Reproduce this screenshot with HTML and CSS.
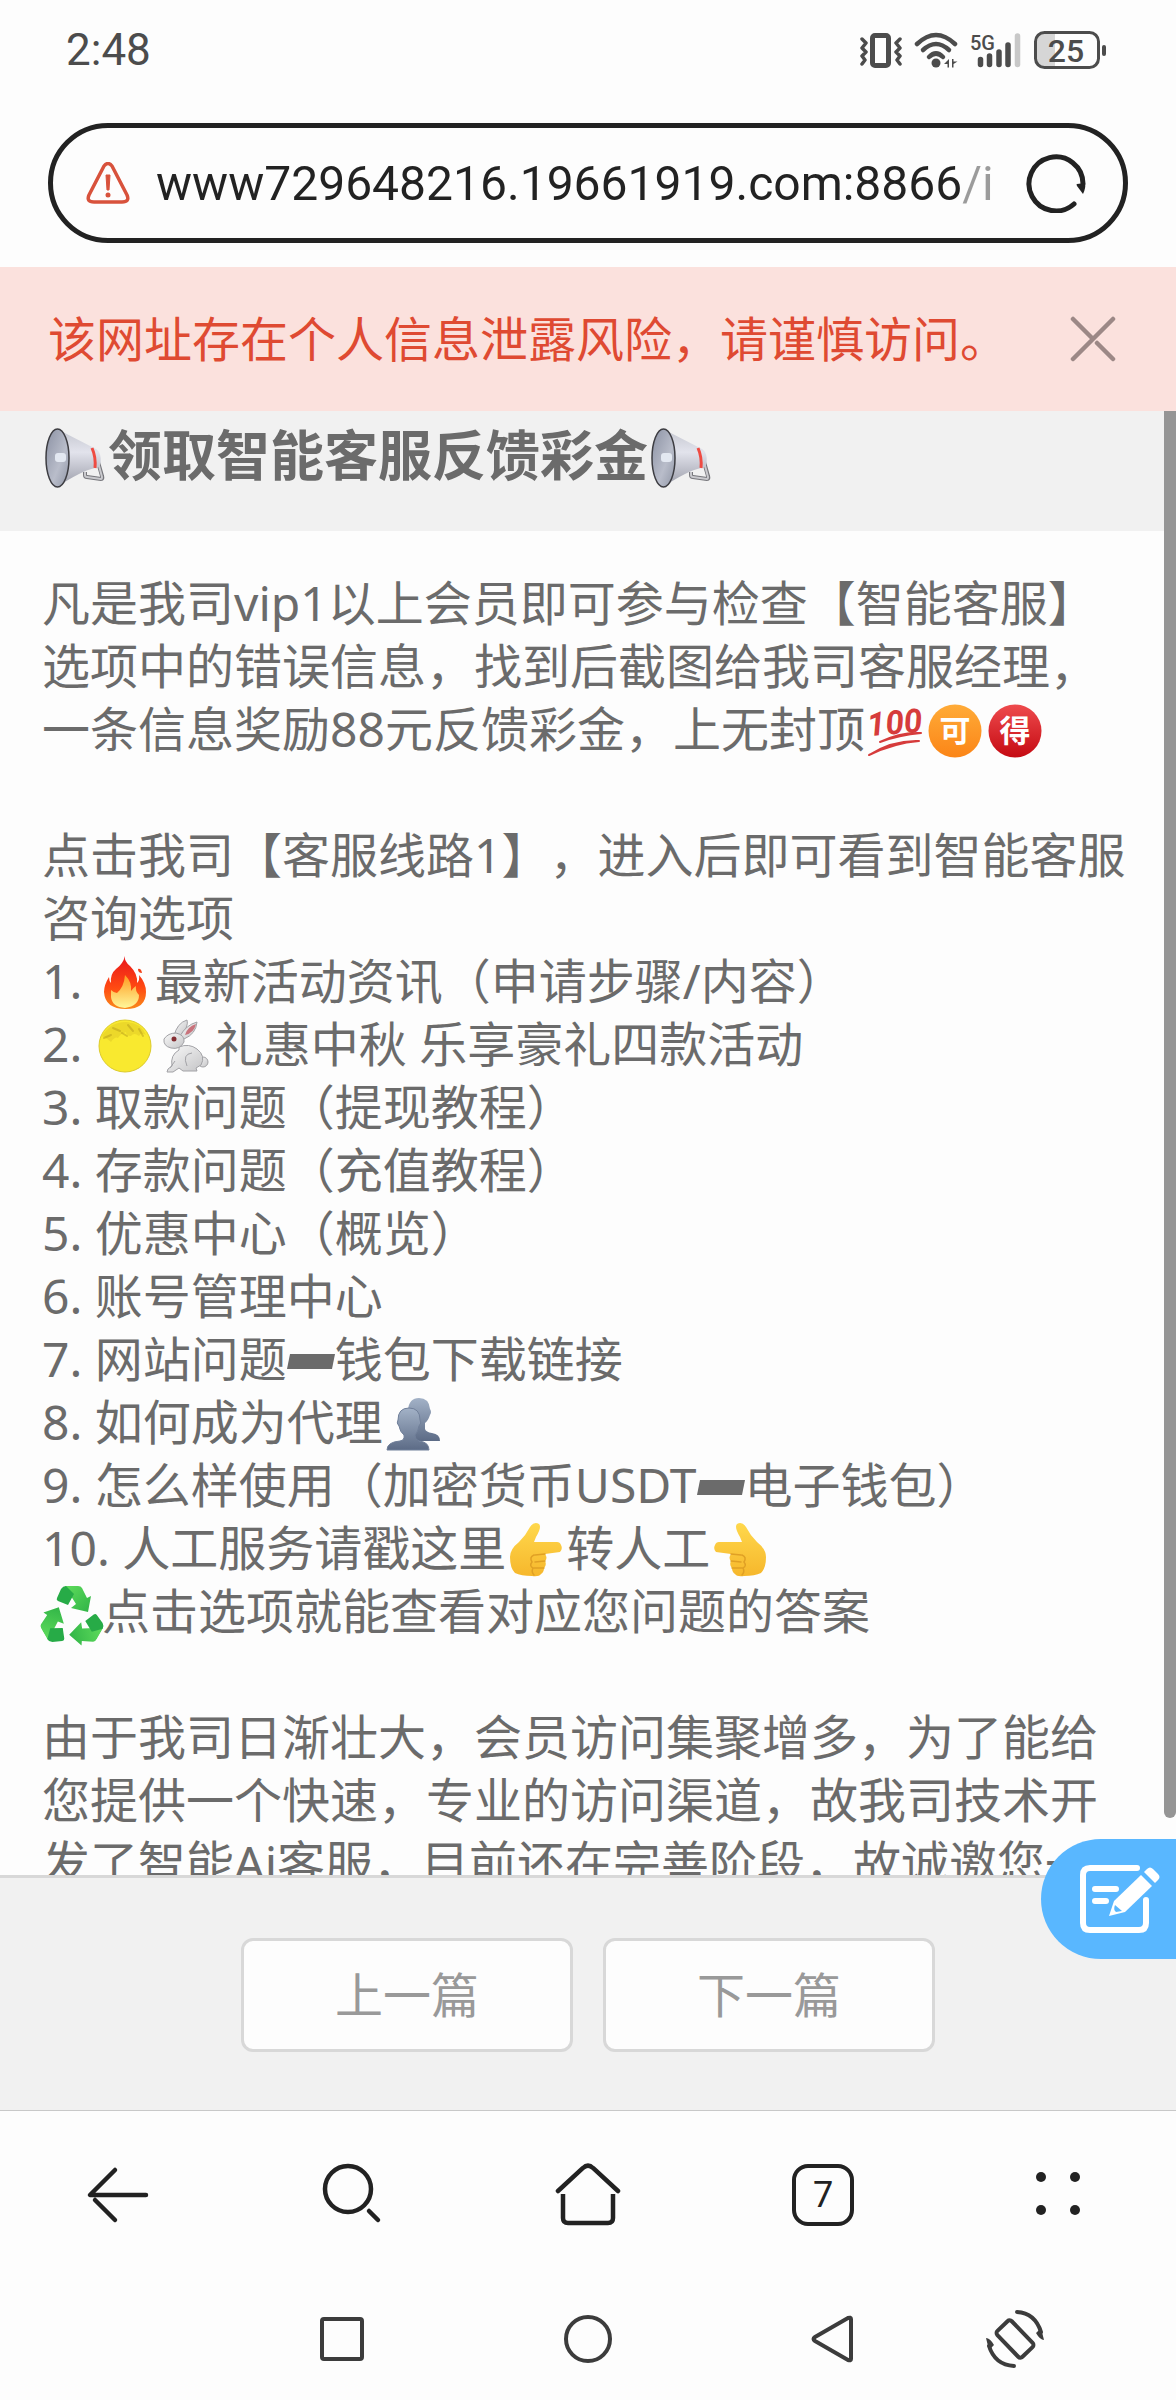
FILE: index.html
```html
<!DOCTYPE html>
<html lang="zh-CN">
  <head>
    <meta charset="UTF-8" />
    <meta name="viewport" content="width=device-width, initial-scale=1.0" />
    <title>领取智能客服反馈彩金</title>
    <link rel="stylesheet" href="styles.css">
  </head>
  <body>
    <!-- shared emoji -->
    <svg class="sprite" aria-hidden="true">
      <defs>
        <linearGradient id="bell" x1="0" y1="0" x2="1" y2="1">
          <stop offset="0" stop-color="#8b91a3" />
          <stop offset="0.6" stop-color="#b9bdca" />
          <stop offset="1" stop-color="#8f95a5" />
        </linearGradient>
        <linearGradient id="cone" x1="0" y1="0" x2="0" y2="1">
          <stop offset="0" stop-color="#c4c6cf" />
          <stop offset="0.4" stop-color="#e2e3ec" />
          <stop offset="1" stop-color="#9a9ca8" />
        </linearGradient>
        <linearGradient id="hand-fill" x1="0" y1="0" x2="0" y2="1">
          <stop offset="0" stop-color="#ffd84c" />
          <stop offset="1" stop-color="#f6b72c" />
        </linearGradient>
        <linearGradient id="leaf" x1="0" y1="0" x2="1" y2="1">
          <stop offset="0" stop-color="#5fdc5c" />
          <stop offset="1" stop-color="#2fb346" />
        </linearGradient>
      </defs>
      <symbol id="megaphone" viewBox="0 0 60 60">
        <path d="M40 44v3q0 2 2 2l14 2q2 0 1-3l-4-14" fill="none" stroke="#77777c" stroke-width="4" stroke-linejoin="round" />
        <path d="M40 44v3q0 2 2 2l14 2q1 0 1-2l-4-15" fill="none" stroke="#c9c9cd" stroke-width="2" stroke-linejoin="round" />
        <path d="M12 1L49 20q3 1 5 4 3 6 1 13-1 3-5 3-14 3-38 19z" fill="url(#cone)" />
        <path d="M47 20q4 9 3 20" fill="none" stroke="#ef4b42" stroke-width="3" />
        <ellipse cx="12.500" cy="30" rx="11.500" ry="29" fill="url(#bell)" stroke="#3d3d42" stroke-width="1.500" />
        <rect x="10" y="25" width="11" height="9" rx="3" fill="#e3e8f1" />
      </symbol>
      <symbol id="minus" viewBox="0 0 48 54">
        <path d="M3 20h45l-3 15H0z" fill="#6b6b6b" />
      </symbol>
      <symbol id="hand" viewBox="0 0 54 54">
        <path d="M52 22q2 4-1 7l-15 2q3 4 0 7 2 4-1 7 0 4-3 6-2 3-9 2-11 0-17-3-5-5-5-16 0-8 9-15 7-7 11-15 4-6 9-3 3 3-3 13l-2 5 23 0q3 0 4 3z" fill="url(#hand-fill)" />
        <path d="M26 32l10-1M26 39l10-1M25 45l10 0M25 32q-5 2-2 7-3 4 1 6-2 4 1 7" fill="none" stroke="#e0a025" stroke-width="1.500" stroke-linecap="round" />
      </symbol>
      <symbol id="recycle-arrow" viewBox="0 0 54 54">
        <path d="M20 0h13q3 0 4 2l5 10 4-2-3 16-17-4 5-4-7-11z" fill="url(#leaf)" />
        <path d="M21 0q-3 0-5 3l-4 9q-1 2 1 3l10 4 6-11z" fill="#27ab47" />
      </symbol>
    </svg>

    <div class="phone">
      <header class="status-bar">
        <time>2:48</time>
        <div class="status-icons">
          <svg class="status-icon" width="42" height="38" viewBox="0 0 42 38" aria-label="振动">
            <rect x="12.500" y="4.500" width="16" height="30" rx="2.500" fill="none" stroke="#4c4c4c" stroke-width="5" />
            <path d="M2 8l4 4-4 5 4 4-4 4 3 4-3 4M40 8l-4 4 4 5-4 4 4 4-3 4 3 4" fill="none" stroke="#4c4c4c" stroke-width="3.500" stroke-linecap="round" stroke-linejoin="round" />
          </svg>
          <svg class="status-icon" width="44" height="38" viewBox="0 0 44 38" aria-label="Wi-Fi">
            <g fill="none" stroke="#4c4c4c" stroke-width="4.500" stroke-linecap="round">
              <path d="M3 13q19-18 38 0" />
              <path d="M9 19q13-12 26 0" />
              <path d="M15 26q7-7 14 0" />
            </g>
            <circle cx="22" cy="32" r="4.500" fill="#4c4c4c" />
            <path d="M35 28v8.500h-1.500V33H30zM38 28v8.500h1.500V33l4-2.500h-4V28z" fill="#4c4c4c" />
          </svg>
          <svg class="status-icon" width="52" height="38" viewBox="0 0 52 38" aria-label="5G">
            <text x="0" y="19" class="network">5G</text>
            <g stroke="#4c4c4c" stroke-width="5.500" stroke-linecap="round">
              <path d="M10.500 28.500v5M19.500 25v8.500M29 21v12.500M38 14v19.500" />
              <path d="M47.500 5v28.500" stroke="#c8c8c8" />
            </g>
          </svg>
          <svg class="status-icon" width="74" height="38" viewBox="0 0 74 38" aria-label="电量 25%">
            <path d="M10 2h11v34H10q-8 0-8-8V10q0-8 8-8z" fill="#d6d6d6" />
            <rect x="1.500" y="1.500" width="63" height="35" rx="9" fill="none" stroke="#4c4c4c" stroke-width="3" />
            <rect x="68" y="14" width="4" height="11" rx="2" fill="#4c4c4c" />
            <text x="32" y="31" class="battery">25</text>
          </svg>
        </div>
      </header>

      <form class="address-bar">
        <svg width="44" height="42" viewBox="0 0 44 42" aria-hidden="true">
          <path d="M18 4q4-5 8 0l15 29q3 7-5 7H8q-8 0-5-7z" fill="none" stroke="#d8523c" stroke-width="3.500" stroke-linejoin="round" />
          <path d="M20 13h4l-1 15h-2z" fill="#d8523c" stroke="#d8523c" stroke-linejoin="round" />
          <circle cx="22" cy="33" r="2.500" fill="#d8523c" />
        </svg>
        <input class="url" type="text" aria-label="网址" value="www729648216.19661919.com:8866/i">
        <button type="button" class="icon-button" aria-label="刷新">
          <svg width="60" height="60" viewBox="0 0 60 60">
            <path d="M48 51A27 27 0 1 1 57 31" fill="none" stroke="#222" stroke-width="5" stroke-linecap="round" />
            <path d="M51 31l8-1q1 5-2 11l-6-8q-1-2 0-2z" fill="#222" />
          </svg>
        </button>
      </form>

      <div class="warning" role="alert">
        <span>该网址存在个人信息泄露风险，请谨慎访问。</span>
        <button type="button" class="icon-button" aria-label="关闭">
          <svg width="46" height="46" viewBox="0 0 46 46">
            <path d="M3 3l20 20M43 3L3 43M27 27l16 16" fill="none" stroke="#9c8886" stroke-width="4.500" stroke-linecap="round" />
          </svg>
        </button>
      </div>

      <main class="page">
        <h1 class="title"><svg class="emoji"><use href="#megaphone" /></svg>领取智能客服反馈彩金<svg class="emoji"><use href="#megaphone" /></svg></h1>

        <article class="article">
          <p>凡是我司vip1以上会员即可参与检查【智能客服】选项中的错误信息，找到后截图给我司客服经理，一条信息奖励88元反馈彩金，上无封顶<svg class="emoji" viewBox="0 0 54 54">
              <text x="0" y="30" class="hundred" transform="rotate(-5 27 30)">100</text>
              <path d="M12 38q20-10 41-9-22 2-41 9zM1 51q24-15 50-14-25 2-50 14z" fill="#d63b3b" stroke="#d63b3b" stroke-width="2" stroke-linejoin="round" />
            </svg><svg class="emoji" viewBox="0 0 54 54">
              <defs>
                <linearGradient id="orange" x1="0" y1="0" x2="0" y2="1">
                  <stop offset="0" stop-color="#ffab38" />
                  <stop offset="1" stop-color="#fb8517" />
                </linearGradient>
              </defs>
              <circle cx="27" cy="27" r="26.500" fill="url(#orange)" />
              <text x="27" y="38" class="badge-text">可</text>
            </svg><svg class="emoji" viewBox="0 0 54 54">
              <defs>
                <linearGradient id="red" x1="0" y1="0" x2="0" y2="1">
                  <stop offset="0" stop-color="#ee4b4d" />
                  <stop offset="1" stop-color="#c50a12" />
                </linearGradient>
              </defs>
              <circle cx="27" cy="27" r="26.500" fill="url(#red)" />
              <text x="27" y="38" class="badge-text">得</text>
            </svg></p>

          <p>
            点击我司【客服线路1】，进入后即可看到智能客服咨询选项<br>
            1. <svg class="emoji" viewBox="0 0 54 54">
              <defs>
                <linearGradient id="flame" x1="0" y1="0" x2="0" y2="1">
                  <stop offset="0" stop-color="#e8151b" />
                  <stop offset="0.6" stop-color="#ff4a12" />
                  <stop offset="1" stop-color="#f98a1c" />
                </linearGradient>
                <linearGradient id="flame-core" x1="0" y1="0" x2="0" y2="1">
                  <stop offset="0" stop-color="#ff9a1e" />
                  <stop offset="1" stop-color="#fff79a" />
                </linearGradient>
              </defs>
              <path d="M27 0q-1 5 5 10 8 8 7 17 3-3 2-8 7 8 7 17 0 17-20 17Q7 53 6 36q0-7 5-15 0 4 2 6-1-9 5-14Q25 8 27 0z" fill="url(#flame)" />
              <path d="M40 13q3-1 4 4-4 0-4-4z" fill="#f24319" />
              <path d="M27 19q7 7 6 16 2-3 5-5-1 5 3 9 0 11-14 13-13-1-14-11l0-7q3 3 6 3 7-6 8-18z" fill="url(#flame-core)" />
            </svg>最新活动资讯（申请步骤/内容）<br>
            2. <svg class="emoji" viewBox="0 0 54 54">
              <circle cx="27" cy="27" r="26" fill="#f9e92f" stroke="#dccb2c" />
              <path d="M4 17Q13 2 29 3q14 1 19 13-5-3-7 1-5-4-8 0-5 0-5-4-6 2-8 6-3-2-7 4-3-3-9-6z" fill="#cdb322" opacity="0.300" />
              <path d="M6 19l7-3M15 9l7 3M30 6l5 6M41 10l4 7M24 14l5 3" stroke="#a98f18" stroke-width="2" stroke-linecap="round" opacity="0.400" />
            </svg><svg class="emoji" viewBox="0 0 54 54">
              <defs>
                <linearGradient id="fur" x1="0" y1="0" x2="1" y2="1">
                  <stop offset="0" stop-color="#fafafa" />
                  <stop offset="1" stop-color="#c4c4c6" />
                </linearGradient>
              </defs>
              <g stroke="#a2a2a6" fill="url(#fur)">
                <circle cx="45" cy="43" r="5" />
                <path d="M16 17Q19 4 29 1q2 6-6 16z" />
                <path d="M22 17q6-11 17-14-1 12-13 17z" />
                <path d="M21 28q10-4 18 2 9 7 4 16l-5 3 1 3-14 0-4-3-6 4H9l1-3 4-3q-2-11 7-16z" />
                <path d="M6 20q4-6 12-6 9 2 8 9-4 8-13 6-8-2-7-9z" />
              </g>
              <path d="M27 16Q29 8 38 5q-2 9-11 11z" fill="#c9727b" />
              <path d="M29 47q-5-12 5-13M12 49l5-7" fill="none" stroke="#a2a2a6" />
              <circle cx="16" cy="20" r="2.500" fill="#842e32" />
            </svg>礼惠中秋 乐享豪礼四款活动<br>
            3. 取款问题（提现教程）<br>
            4. 存款问题（充值教程）<br>
            5. 优惠中心（概览）<br>
            6. 账号管理中心<br>
            7. 网站问题<svg class="emoji emoji-minus"><use href="#minus" /></svg>钱包下载链接<br>
            8. 如何成为代理<svg class="emoji" viewBox="0 0 54 54">
              <defs>
                <linearGradient id="bust" x1="0" y1="0" x2="0" y2="1">
                  <stop offset="0" stop-color="#a3b2c7" />
                  <stop offset="1" stop-color="#5c6b86" />
                </linearGradient>
              </defs>
              <path d="M22 13Q23 1 33 1q10 0 11 11 2 3 0 6-2 6-5 8v6q1 3 7 4 8 1 8 8H26z" fill="url(#bust)" />
              <path d="M14 44q5-1 4-6-4-3-5-9-3-3-1-6 0-12 11-12 11 0 11 12 2 3-1 6-1 6-4 9 0 5 4 6 10 1 10 9H1q0-8 13-9z" fill="url(#bust)" stroke="#71809a" />
            </svg><br>
            9. 怎么样使用（加密货币USDT<svg class="emoji emoji-minus"><use href="#minus" /></svg>电子钱包）<br>
            10. 人工服务请戳这里<svg class="emoji"><use href="#hand" /></svg>转人工<svg class="emoji" viewBox="0 0 54 54"><use href="#hand" width="54" height="54" transform="translate(54 0) scale(-1 1)" /></svg><br>
            <svg class="emoji" viewBox="0 0 54 54">
              <use href="#recycle-arrow" width="54" height="54" />
              <use href="#recycle-arrow" width="54" height="54" transform="rotate(120 27 32)" />
              <use href="#recycle-arrow" width="54" height="54" transform="rotate(240 27 32)" />
            </svg>点击选项就能查看对应您问题的答案
          </p>

          <p>由于我司日渐壮大，会员访问集聚增多，为了能给您提供一个快速，专业的访问渠道，故我司技术开发了智能Ai客服，目前还在完善阶段，故诚邀您一</p>
        </article>

        <div class="scrollbar"></div>
      </main>

      <div class="pager">
        <button type="button">上一篇</button>
        <button type="button">下一篇</button>
        <button type="button" class="feedback" aria-label="反馈">
          <svg width="80" height="70" viewBox="0 0 80 70">
            <path d="M57 4H10q-7 0-7 7v48q0 7 7 7h49q7 0 7-7V36" fill="none" stroke="#fff" stroke-width="6" stroke-linecap="round" />
            <path d="M15 25h21M15 37h11" stroke="#fff" stroke-width="6" stroke-linecap="round" />
            <path d="M61 11l11 11-27 26-16 4 5-15z" fill="#fff" />
            <path d="M64 8l3-3q3-3 6 0l5 5q3 3 0 6l-3 3z" fill="#fff" />
            <path d="M35 41l7 6-6 1q-3-2-1-7z" fill="#59b7ff" />
          </svg>
        </button>
      </div>

      <nav class="toolbar">
        <button type="button" class="icon-button" aria-label="返回">
          <svg width="64" height="64" viewBox="0 0 64 64">
            <path d="M29 7L4 32h56M9 37l20 20" fill="none" stroke="#222" stroke-width="4.500" stroke-linecap="round" stroke-linejoin="round" />
          </svg>
        </button>
        <button type="button" class="icon-button" aria-label="搜索">
          <svg width="64" height="64" viewBox="0 0 64 64">
            <circle cx="27" cy="26" r="23" fill="none" stroke="#222" stroke-width="4.500" />
            <path d="M48 48l9 9" stroke="#222" stroke-width="4.500" stroke-linecap="round" />
          </svg>
        </button>
        <button type="button" class="icon-button" aria-label="主页">
          <svg width="66" height="64" viewBox="0 0 66 64">
            <path d="M3 28L28 5q5-5 10 0l25 23" fill="none" stroke="#222" stroke-width="4.500" stroke-linecap="round" />
            <path d="M8 31v24q0 5 5 5h40q5 0 5-5V31" fill="none" stroke="#222" stroke-width="4.500" />
          </svg>
        </button>
        <button type="button" class="tabs" aria-label="标签页">7</button>
        <button type="button" class="icon-button" aria-label="菜单">
          <svg width="64" height="64" viewBox="0 0 64 64" fill="#222">
            <circle cx="15" cy="14" r="5" />
            <circle cx="49" cy="14" r="5" />
            <circle cx="15" cy="47" r="5" />
            <circle cx="49" cy="47" r="5" />
          </svg>
        </button>
      </nav>

      <nav class="system-nav">
        <button type="button" class="icon-button recents" aria-label="最近任务">
          <svg width="60" height="60" viewBox="0 0 60 60">
            <rect x="10" y="10" width="40" height="40" rx="2" fill="none" stroke="#3c3c3c" stroke-width="4" />
          </svg>
        </button>
        <button type="button" class="icon-button" aria-label="桌面">
          <svg width="60" height="60" viewBox="0 0 60 60">
            <circle cx="30" cy="30" r="22" fill="none" stroke="#3c3c3c" stroke-width="4" />
          </svg>
        </button>
        <button type="button" class="icon-button" aria-label="后退">
          <svg width="60" height="60" viewBox="0 0 60 60">
            <path d="M48 10v40q0 2-3 1L12 32q-3-2 0-4L45 9q3-1 3 1z" fill="none" stroke="#3c3c3c" stroke-width="4" stroke-linejoin="round" />
          </svg>
        </button>
        <button type="button" class="icon-button" aria-label="旋转屏幕">
          <svg width="60" height="60" viewBox="0 0 60 60">
            <rect x="20" y="12" width="20" height="36" rx="3" fill="none" stroke="#3c3c3c" stroke-width="4" transform="rotate(-44 30 30)" />
            <path d="M32 3q18 1 24 20M29 57Q10 56 4 37" fill="none" stroke="#3c3c3c" stroke-width="4" stroke-linecap="round" />
            <path d="M51 24l5-5 3 12q-4 0-8-7zM9 36l-5 5-3-12q4 0 8 7z" fill="#3c3c3c" />
          </svg>
        </button>
      </nav>
    </div>
  </body>
</html>
```
FILE: styles.css
```css
:root {
  --surface: #fdfdfd;
  --panel: #f1f1f1;
  --line: #d8d8d8;
  --text: #6b6b6b;
  --dark: #222;
  --danger: #df4a32;
}

* {
  margin: 0;
  padding: 0;
  box-sizing: border-box;
}

body {
  background-color: var(--surface);
  font-family: 'Noto Sans', 'Noto Sans CJK SC', sans-serif;
  font-size: 48px;
  color: var(--text);
  text-spacing-trim: space-all;
}

button {
  font: inherit;
  color: inherit;
  border: none;
  background: none;
  cursor: pointer;
}

svg {
  flex-shrink: 0;
}

.sprite {
  position: absolute;
  width: 0;
  height: 0;
}

.phone {
  height: 100vh;
  display: flex;
  flex-direction: column;
}

.icon-button {
  display: flex;
  align-items: center;
  justify-content: center;
}

/* Status bar */
.status-bar {
  display: flex;
  align-items: center;
  justify-content: space-between;
  height: 100px;
  padding: 0 68px 0 66px;
  font-family: Roboto, sans-serif;
  font-size: 44px;
  color: #4c4c4c;
}

.status-icons {
  display: flex;
  gap: 12px;
}

.network {
  font: 500 20px Roboto, sans-serif;
  fill: #4c4c4c;
}

.battery {
  font: 500 32px Roboto, sans-serif;
  text-anchor: middle;
  fill: #4c4c4c;
}

/* Address bar */
.address-bar {
  display: flex;
  align-items: center;
  height: 120px;
  margin: 23px 48px 24px;
  padding: 0 37px 0 33px;
  border: 5px solid var(--dark);
  border-radius: 60px;
}

.url {
  flex: 1;
  min-width: 0;
  margin: 0 32px 0 26px;
  border: none;
  outline: none;
  background: linear-gradient(90deg, var(--dark) 804px, #9b9b9b 804px);
  -webkit-background-clip: text;
  background-clip: text;
  font-family: Roboto, sans-serif;
  font-size: 48px;
  color: transparent;
}

/* Risk banner */
.warning {
  display: flex;
  align-items: center;
  justify-content: space-between;
  height: 144px;
  padding: 0 60px 0 48px;
  background-color: #fbe1dd;
  color: var(--danger);
}

.warning span {
  padding-bottom: 6px;
}

/* Web page */
.page {
  position: relative;
  flex: 1;
  min-height: 0;
  overflow: hidden;
}

.title {
  height: 120px;
  padding: 0 42px;
  background-color: var(--panel);
  font-size: 54px;
  font-weight: 700;
  line-height: 88px;
}

.article {
  padding: 40px 42px;
  line-height: 63px;
}

.article p {
  margin-bottom: 63px;
}

.emoji {
  width: 54px;
  height: 54px;
  margin: -6px 3px 0;
  overflow: visible;
  vertical-align: middle;
}

.title .emoji {
  width: 60px;
  height: 60px;
}

.article .emoji-minus {
  width: 48px;
  margin-left: 0;
  margin-right: 0;
}

.hundred {
  font: italic 700 33px Roboto, sans-serif;
  fill: #d63b3b;
}

.badge-text {
  font: 700 31px 'Noto Sans CJK SC', sans-serif;
  text-anchor: middle;
  fill: #fff;
}

.scrollbar {
  position: absolute;
  top: 0;
  right: 0;
  bottom: 57px;
  width: 12px;
  background-color: #959595;
  border-radius: 0 0 6px 6px;
}

.pager {
  position: relative;
  display: flex;
  justify-content: center;
  gap: 30px;
  padding: 60px 48px 58px;
  border-top: 3px solid var(--line);
  border-bottom: 1px solid #c8c8c8;
  background-color: var(--panel);
}

.pager button {
  width: 332px;
  height: 114px;
  padding-bottom: 6px;
  border: 3px solid var(--line);
  border-radius: 12px;
  background-color: var(--surface);
  color: #999;
}

/* floats over the page's right edge */
.pager .feedback {
  position: absolute;
  top: -39px;
  right: 0;
  display: flex;
  align-items: center;
  width: 135px;
  height: 120px;
  padding: 0 0 0 39px;
  border: none;
  border-radius: 60px 0 0 60px;
  background-color: #59b7ff;
}

/* Browser toolbar */
.toolbar {
  display: grid;
  grid-template-columns: repeat(5, 1fr);
  align-items: center;
  justify-items: center;
  height: 168px;
  color: var(--dark);
}

.tabs {
  width: 62px;
  height: 62px;
  border: 4px solid var(--dark);
  border-radius: 16px;
  font-family: Roboto, sans-serif;
  font-size: 36px;
  line-height: 50px;
}

/* System navigation */
.system-nav {
  display: grid;
  grid-template-columns: 219fr 246fr 246fr 244fr 120fr 101fr;
  align-items: center;
  justify-items: center;
  height: 121px;
  padding-bottom: 2px;
}

.recents {
  grid-column-start: 2;
}
```
